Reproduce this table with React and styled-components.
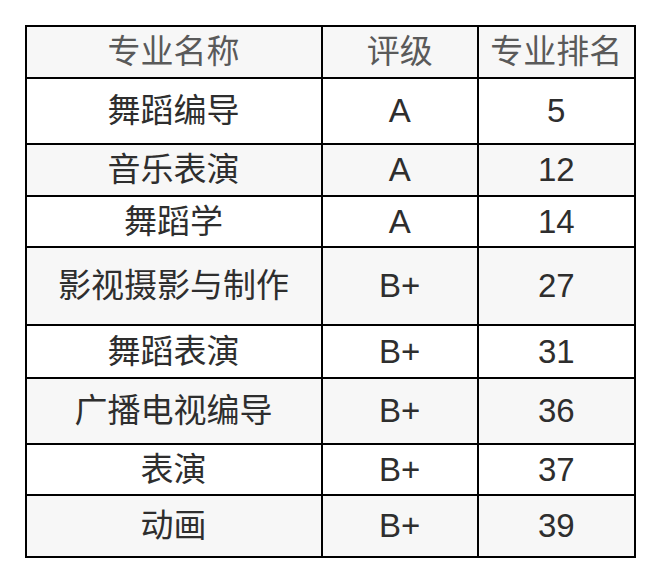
import styled, { createGlobalStyle } from 'styled-components';

const GlobalStyle = createGlobalStyle`
  body {
    margin: 0;
    background: #ffffff;
    font-family: "Liberation Sans", "Noto Sans CJK SC", sans-serif;
  }
`;

const rows = [
  { name: '舞蹈编导', grade: 'A', rank: 5, h: 66 },
  { name: '音乐表演', grade: 'A', rank: 12, h: 52 },
  { name: '舞蹈学', grade: 'A', rank: 14, h: 51 },
  { name: '影视摄影与制作', grade: 'B+', rank: 27, h: 78 },
  { name: '舞蹈表演', grade: 'B+', rank: 31, h: 53 },
  { name: '广播电视编导', grade: 'B+', rank: 36, h: 66 },
  { name: '表演', grade: 'B+', rank: 37, h: 51 },
  { name: '动画', grade: 'B+', rank: 39, h: 62 },
];

function App() {
  return (
    <>
      <GlobalStyle />
      <Wrap>
        <Table>
          <colgroup>
            <col style={{ width: 296 }} />
            <col style={{ width: 156.5 }} />
            <col style={{ width: 156.5 }} />
          </colgroup>
          <thead>
            <Row $h={52} $shade>
              <Head>专业名称</Head>
              <Head>评级</Head>
              <Head>专业排名</Head>
            </Row>
          </thead>
          <tbody>
            {rows.map((r, i) => (
              <Row key={r.name} $h={r.h} $shade={i % 2 === 1}>
                <Cell>{r.name}</Cell>
                <Cell>{r.grade}</Cell>
                <Cell>{r.rank}</Cell>
              </Row>
            ))}
          </tbody>
        </Table>
      </Wrap>
    </>
  );
}

export default App;

const Wrap = styled.div`
  padding: 24.5px 0 0 24.5px;
`;

const Table = styled.table`
  width: 611px;
  table-layout: fixed;
  border-collapse: separate;
  border-spacing: 0;
  border-top: 2px solid #000;
  border-left: 2px solid #000;
`;

const Row = styled.tr`
  height: ${p => p.$h}px;
  background: ${p => (p.$shade ? '#f7f7f7' : '#ffffff')};
`;

const Head = styled.th`
  padding: 0;
  border-right: 2px solid #000;
  border-bottom: 2px solid #000;
  font-weight: normal;
  font-size: 33px;
  color: #5a5a5a;
  text-align: center;
  vertical-align: middle;
  line-height: 1;
`;

const Cell = styled.td`
  padding: 0;
  border-right: 2px solid #000;
  border-bottom: 2px solid #000;
  font-size: 33px;
  color: #2e2e2e;
  text-align: center;
  vertical-align: middle;
  line-height: 1;
  white-space: nowrap;
`;
